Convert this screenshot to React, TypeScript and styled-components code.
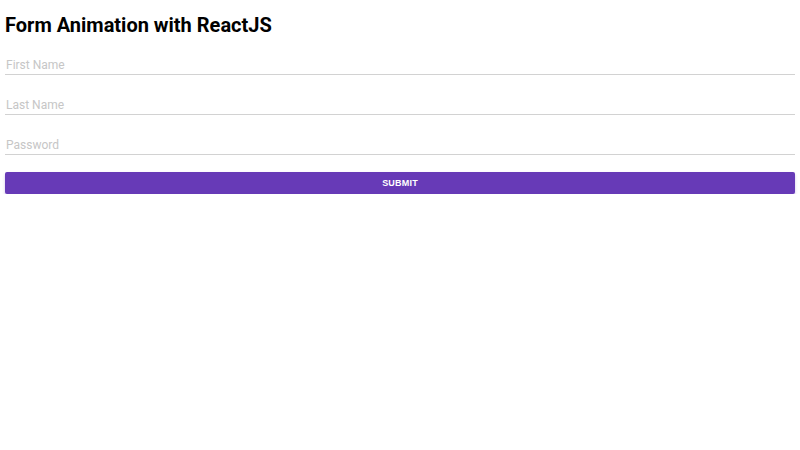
import React from 'react';
import styled, { createGlobalStyle } from 'styled-components';

const GlobalStyle = createGlobalStyle`
  html, body {
    margin: 0;
    padding: 0;
    background: #ffffff;
    font-family: Roboto, "Helvetica Neue", Arial, sans-serif;
  }
  * {
    box-sizing: border-box;
  }
`;

const Page = styled.main`
  padding: 15px 5px 0 5px;
`;

const Title = styled.h1`
  margin: 0;
  font-family: Roboto, Arial, sans-serif;
  font-size: 20px;
  font-weight: 700;
  line-height: 20px;
  color: #000000;
`;

const Form = styled.form`
  display: flex;
  flex-direction: column;
`;

const Field = styled.div`
  height: 40px;
  display: flex;
  align-items: flex-end;
`;

const Input = styled.input`
  width: 100%;
  height: 19px;
  border: none;
  border-bottom: 1px solid #d2d2d2;
  outline: none;
  padding: 0 1px 1px 1px;
  font-family: Roboto, Arial, sans-serif;
  font-size: 12px;
  color: #333333;
  background: transparent;

  &::placeholder {
    color: #c6c6c6;
  }
`;

const SubmitButton = styled.button`
  margin-top: 17px;
  height: 22px;
  width: 100%;
  border: none;
  border-radius: 2px;
  background: #673ab7;
  color: #ffffff;
  font-family: "Liberation Sans", Arial, sans-serif;
  font-size: 9px;
  font-weight: 700;
  letter-spacing: 0.2px;
  text-transform: uppercase;
  box-shadow: 0 2px 3px rgba(103, 58, 183, 0.3);
  cursor: pointer;
`;

const fields = [
  { name: 'firstName', label: 'First Name', type: 'text' },
  { name: 'lastName', label: 'Last Name', type: 'text' },
  { name: 'password', label: 'Password', type: 'password' },
];

const App = () => {
  return (
    <Page>
      <GlobalStyle />
      <Title>Form Animation with ReactJS</Title>
      <Form onSubmit={(e) => e.preventDefault()}>
        {fields.map((field) => (
          <Field key={field.name}>
            <Input name={field.name} type={field.type} placeholder={field.label} />
          </Field>
        ))}
        <SubmitButton type={'submit'}>Submit</SubmitButton>
      </Form>
    </Page>
  );
};
export default App;
